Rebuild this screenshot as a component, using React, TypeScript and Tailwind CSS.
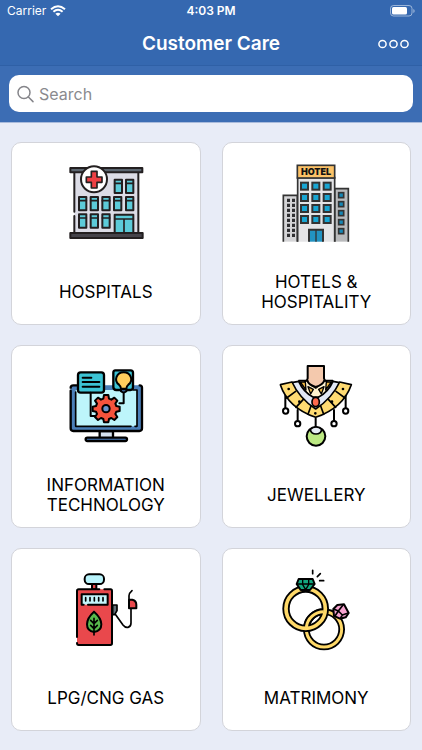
import type { ReactNode } from "react";

function HospitalIcon() {
  const small = [
    [163, 74], [197, 74],
    [56, 126], [91, 126], [126, 126], [161, 126], [197, 126],
    [56, 178], [91, 178], [126, 178],
  ];
  return (
    <svg viewBox="-1 0 276 276" className="size-[92px]" aria-hidden="true" strokeLinejoin="round" strokeLinecap="round">
      <rect x="42" y="50" width="192" height="184" fill="#dcdce6" />
      <path d="M42 55V170M42 183V234M234 55V234" stroke="#231f20" strokeWidth="6" />
      <rect x="30" y="39" width="216" height="13" fill="#5c6670" stroke="#231f20" strokeWidth="6" />
      <rect x="30" y="234" width="217" height="15" fill="#45434a" stroke="#231f20" strokeWidth="6" />
      {small.map(([x, y]) => (
        <g key={`${x}-${y}`} stroke="#231f20" strokeWidth="6">
          <rect x={x} y={y} width="22" height="40" fill="#5ccbd9" />
          <path d={`M${x} ${y + 11}h22`} strokeWidth="5" />
        </g>
      ))}
      <g stroke="#231f20" strokeWidth="6" fill="#5ccbd9">
        <rect x="163" y="179" width="56" height="55" />
        <path d="M163 192H219M191 192V234" strokeWidth="5" />
      </g>
      <circle cx="101" cy="73" r="39" fill="#fff" stroke="#231f20" strokeWidth="6" />
      <path d="M93 49h17v17h15v16h-15v17H93V82H78V66h15Z" fill="#ee4044" stroke="#231f20" strokeWidth="5" />
    </svg>
  );
}

function HotelIcon() {
  return (
    <svg viewBox="-4 0 276 276" className="size-[92px]" aria-hidden="true">
      <path d="M36 260V121H78V260" fill="#d5d5d7" stroke="#333" strokeWidth="5" />
      <path d="M190 260V101H231V260" fill="#b9babc" stroke="#333" strokeWidth="5" />
      {[0, 1, 2, 3, 4, 5, 6, 7].map((row) => (
        <path key={row} d={`M47 ${136 + row * 15}h9M62 ${136 + row * 15}h9`} stroke="#2f2f31" strokeWidth="10" />
      ))}
      {[120, 147, 174, 201, 228].map((y) => (
        <rect key={y} x="202" y={y - 7} width="15" height="15" fill="#1687b5" stroke="#333" strokeWidth="5" />
      ))}
      <path d="M79 260V68H190V260" fill="#e4e4e6" stroke="#333" strokeWidth="5" />
      {[83, 117, 150, 183].map((y) =>
        [89, 123, 157].map((x) => (
          <rect key={`${x}-${y}`} x={x} y={y} width="21" height="21" fill="#18a5d2" stroke="#333" strokeWidth="6" />
        ))
      )}
      <rect x="78" y="31" width="112" height="38" fill="#fcc267" stroke="#333" strokeWidth="5" />
      <text x="134" y="60" textAnchor="middle" fill="#111" className="font-['Inter',sans-serif] text-[27px] font-black">
        HOTEL
      </text>
      <path d="M113 260V224H155V260" fill="#2293c2" stroke="#333" strokeWidth="6" />
      <path d="M134 224V260" stroke="#333" strokeWidth="4" />
    </svg>
  );
}

function TechnologyIcon() {
  return (
    <svg viewBox="-1 -6 276 276" className="size-[92px]" aria-hidden="true" stroke="#000" strokeWidth="7" strokeLinejoin="round" strokeLinecap="round">
      <rect x="118" y="213" width="40" height="22" fill="#d6e3f0" />
      <rect x="76" y="233" width="124" height="10" rx="5" fill="#4a7fc0" />
      <rect x="31" y="76" width="214" height="137" rx="7" fill="#4a7fb8" stroke="none" />
      <path d="M31 92V205q0 8 8 8H237q8 0 8-8V83q0-7-7-7M31 83q0-7 8-7h10" fill="none" />
      <rect x="46" y="90" width="184" height="109" fill="#bdf5fb" stroke="none" />
      <path d="M46 96V199H212M224 199h6V90H218" fill="none" strokeWidth="5" />
      <rect x="53" y="37" width="78" height="61" rx="8" fill="#3cc3d4" />
      <path d="M67 53H93M67 66H117M67 80H117" strokeWidth="6" />
      <path d="M91 98V168H103M190 98V130H177" fill="none" strokeWidth="6" />
      <path d="M165 31H211q7 0 7 7V82q0 8-8 8H168q-9 0-9-9V38q0-7 6-7Z" fill="#3cc3d4" />
      <path d="M182 86q0-7-6-12c-17-13-7-37 14-37s31 24 14 37q-6 5-6 12Z" fill="#ffce5c" strokeWidth="6" />
      <path d="M182 88h16v6q-8 7-16 0Z" fill="#4a7fb8" strokeWidth="6" />
      <path
        d="M131 111h13l2 11 7 3 9-6 9 9-6 9 3 7 10 2v13l-10 2-3 7 6 9-9 9-9-6-7 3-2 10h-13l-2-10-7-3-9 6-9-9 6-9-3-7-10-2v-13l10-2 3-7-6-9 9-9 9 6 7-3Z"
        transform="translate(0 -6)"
        fill="#f4533c"
        strokeWidth="6"
      />
      <circle cx="137" cy="146" r="11" fill="#6794cc" strokeWidth="6" />
    </svg>
  );
}

function JewelleryIcon() {
  return (
    <svg viewBox="-4 -6 276 276" className="size-[92px]" aria-hidden="true" stroke="#000" strokeWidth="5" strokeLinejoin="round" strokeLinecap="round">
      <path d="M83 62h24l26 22 27-22h24q-8 28-40 50h-21q-32-22-40-50Z" fill="#fff3cf" />
      <path d="M87 66h15l2 24ZM180 66h-15l-2 24ZM110 80l8 22 8-14ZM158 80l-8 22-8-14Z" fill="#f5bd43" strokeWidth="4" />
      <path d="M109 18V58q0 16 24 25 25-9 25-25V18Z" fill="#f4c9ad" stroke="none" />
      <path d="M109 18V55q-1 7-8 9M158 18V55q1 7 8 9M109 18h49M108 61q3 14 25 20 22-6 26-20" fill="none" strokeWidth="6" />
      <path d="M61 68l21-4q14 32 44 48h15q30-16 44-48l20 4q-22 58-72 82-50-24-72-82Z" fill="#e1e8f5" />
      <path d="M27 74l35-8q22 49 71 81 49-32 72-81l35 8q-24 69-107 98Q50 143 27 74Z" fill="#ffdb72" />
      <path d="M46 114l27-20M74 142l22-24M110 163l9-25M221 114l-27-20M193 142l-22-24M157 163l-9-25" strokeWidth="5" />
      {[[52, 87], [84, 125], [132, 160], [182, 125], [215, 87]].map(([cx, cy]) => (
        <circle key={cx} cx={cx} cy={cy} r="2" strokeWidth="4" />
      ))}
      <ellipse cx="133" cy="126" rx="11" ry="14" fill="#ff694d" />
      <path d="M42 107V143M79 150V181M188 150V181M223 107V143M133 175V204" strokeWidth="6" />
      {[[43, 153], [79, 191], [188, 191], [223, 153]].map(([cx, cy]) => (
        <circle key={`${cx}-${cy}`} cx={cx} cy={cy} r="8" fill="#fff" strokeWidth="6" />
      ))}
      <circle cx="134" cy="229" r="28" fill="#bce983" strokeWidth="6" />
      <path d="M117 208q17-14 34 0-2 14-17 14t-17-14Z" fill="#e6edf5" />
    </svg>
  );
}

function FuelIcon() {
  return (
    <svg viewBox="-1 -12 276 276" className="size-[92px]" aria-hidden="true" stroke="#000" strokeWidth="6" strokeLinejoin="round" strokeLinecap="round">
      <path d="M95 56h13v17H95Z" fill="#e6474b" />
      <rect x="73" y="28" width="58" height="29" rx="13" fill="#b9f4fc" />
      <path d="M54 73H151q4 0 4 5V235q0 5-5 5H55q-5 0-5-5V78q0-5 4-5Z" fill="#e9484c" stroke="none" />
      <path d="M50 216V78q0-5 5-5H117M132 73h19q4 0 4 5V235q0 5-5 5H55q-5 0-5-6" fill="none" />
      <rect x="64" y="88" width="78" height="31" fill="#c4f5fb" stroke="none" />
      <path d="M70 119h-6V88h78v31H83" fill="none" />
      <path d="M76 98v10M89 98v10M102 98v10M115 98v10M128 98v10" strokeWidth="5" />
      <path d="M101 140q22 19 22 38 0 20-22 23-21-3-21-23 0-19 21-38Z" fill="#58ba4c" />
      <path d="M101 160v50M91 166l10 10 10-10M91 181l10 10 10-10" fill="none" strokeWidth="5" />
      <path d="M157 120h13v17l-7 12h-6Z" fill="#657078" strokeWidth="5" />
      <path d="M166 149l22 31q7 9 15 7 9-2 9-13V132M206 103V92q0-7 9-15" fill="none" strokeWidth="5" />
      <path d="M206 104h10q12 3 12 15v11h-22Z" fill="#e9484c" />
    </svg>
  );
}

function RingsIcon() {
  return (
    <svg viewBox="-4 -12 276 276" className="size-[92px]" aria-hidden="true" stroke="#000" strokeWidth="6" strokeLinejoin="round" strokeLinecap="round">
      <circle cx="158" cy="193" r="53" fill="none" strokeWidth="20" />
      <circle cx="158" cy="193" r="53" fill="none" stroke="#ffd968" strokeWidth="9" />
      <circle cx="103" cy="131" r="59" fill="none" strokeWidth="22" />
      <circle cx="103" cy="131" r="59" fill="none" stroke="#ffd968" strokeWidth="11" />
      <path d="M106 181a53 53 0 0 1 46-41" fill="none" strokeWidth="20" strokeLinecap="butt" />
      <path d="M105 186a53 53 0 0 1 52-46" fill="none" stroke="#ffd968" strokeWidth="9" strokeLinecap="butt" />
      <path d="M82 42h42l6 15-14 18H88L76 57Z" fill="#13a87f" />
      <path d="M77 57h52M94 42v17l9 15 9-15V42" fill="none" strokeWidth="4" />
      <path d="M186 132l12-12 20-2 14 26-9 13-17 4-18-8Z" fill="#f7a4d1" />
      <path d="M187 132l14 6-10 15M201 138l14-18M201 138l12 12 18-6M213 150l-6 10" fill="none" strokeWidth="5" />
      <path d="M124 16V26M147 26l-9 9M145 47h12" fill="none" strokeWidth="5" />
    </svg>
  );
}

const categories: { label: string; icon: ReactNode }[] = [
  { label: "HOSPITALS", icon: <HospitalIcon /> },
  { label: "HOTELS & HOSPITALITY", icon: <HotelIcon /> },
  { label: "INFORMATION TECHNOLOGY", icon: <TechnologyIcon /> },
  { label: "JEWELLERY", icon: <JewelleryIcon /> },
  { label: "LPG/CNG GAS", icon: <FuelIcon /> },
  { label: "MATRIMONY", icon: <RingsIcon /> },
];

function StatusBar() {
  return (
    <div className="grid h-[22px] grid-cols-3 items-center px-[7px] text-[12px] leading-4">
      <div className="flex items-center gap-1">
        <span>Carrier</span>
        <svg viewBox="0 0 16 12" className="h-3 w-4" fill="none" stroke="currentColor" strokeWidth="2" aria-hidden="true">
          <path d="M1 4.2Q8-1.8 15 4.2M3.4 6.8Q8 2.8 12.6 6.8" />
          <path d="M8 11.3 5.4 8.7Q8 6.6 10.6 8.7Z" fill="currentColor" stroke="none" />
        </svg>
      </div>
      <span className="text-center font-semibold">4:03 PM</span>
      <svg viewBox="0 0 25 12" className="h-3 w-[25px] justify-self-end" aria-hidden="true">
        <rect x="0.5" y="0.5" width="21.5" height="10.5" rx="3" fill="none" stroke="#fff" strokeOpacity="0.5" />
        <rect x="2" y="2" width="15" height="7.5" rx="1.5" fill="#fff" />
        <path d="M23.3 4v4q1.4-.6 1.4-2t-1.4-2Z" fill="#fff" fillOpacity="0.5" />
      </svg>
    </div>
  );
}

export default function App() {
  return (
    <div className="min-h-screen bg-[#e8ecf7] font-['Inter','Liberation_Sans',sans-serif] text-black">
      <header className="bg-[#3568b0] text-white">
        <StatusBar />

        <div className="grid h-11 grid-cols-[48px_1fr_48px] items-center border-b border-[#2f60a6]">
          <h1 className="col-start-2 text-center text-[19px] leading-6 font-semibold">Customer Care</h1>
          <button type="button" aria-label="More options" className="flex h-10 items-center pl-1">
            <svg viewBox="0 0 31 10" className="h-[10px] w-[31px]" fill="none" stroke="currentColor" strokeWidth="1.5" aria-hidden="true">
              <circle cx="4.5" cy="5" r="3.6" />
              <circle cx="15.5" cy="5" r="3.6" />
              <circle cx="26.5" cy="5" r="3.6" />
            </svg>
          </button>
        </div>

        <div className="border-b border-[#a9bbdc] bg-[#3c6db4] px-[9px] pt-[9px] pb-[10px]">
          <label className="flex h-[37px] items-center gap-[5px] rounded-[10px] bg-white px-2">
            <svg viewBox="0 0 17 18" className="h-[18px] w-[17px] shrink-0" fill="none" stroke="#85858a" strokeWidth="1.5" strokeLinecap="round" aria-hidden="true">
              <circle cx="7" cy="7.5" r="6" />
              <path d="m11.4 12 4.6 4.6" />
            </svg>
            <input
              type="search"
              placeholder="Search"
              aria-label="Search"
              className="min-w-0 flex-1 bg-transparent text-[16px] text-black outline-none placeholder:text-[#8a8a8e]"
            />
          </label>
        </div>
      </header>

      <main className="grid grid-cols-2 gap-x-[21px] gap-y-5 px-[11px] py-[19px]">
        {categories.map(({ label, icon }) => (
          <button
            key={label}
            type="button"
            className="flex min-h-[183px] flex-col items-center rounded-[10px] border border-[#d3d4da] bg-white px-7 pt-3"
          >
            {icon}
            <span className="mt-[25px] flex min-h-10 items-center text-center text-[17px] leading-5">{label}</span>
          </button>
        ))}
      </main>
    </div>
  );
}
